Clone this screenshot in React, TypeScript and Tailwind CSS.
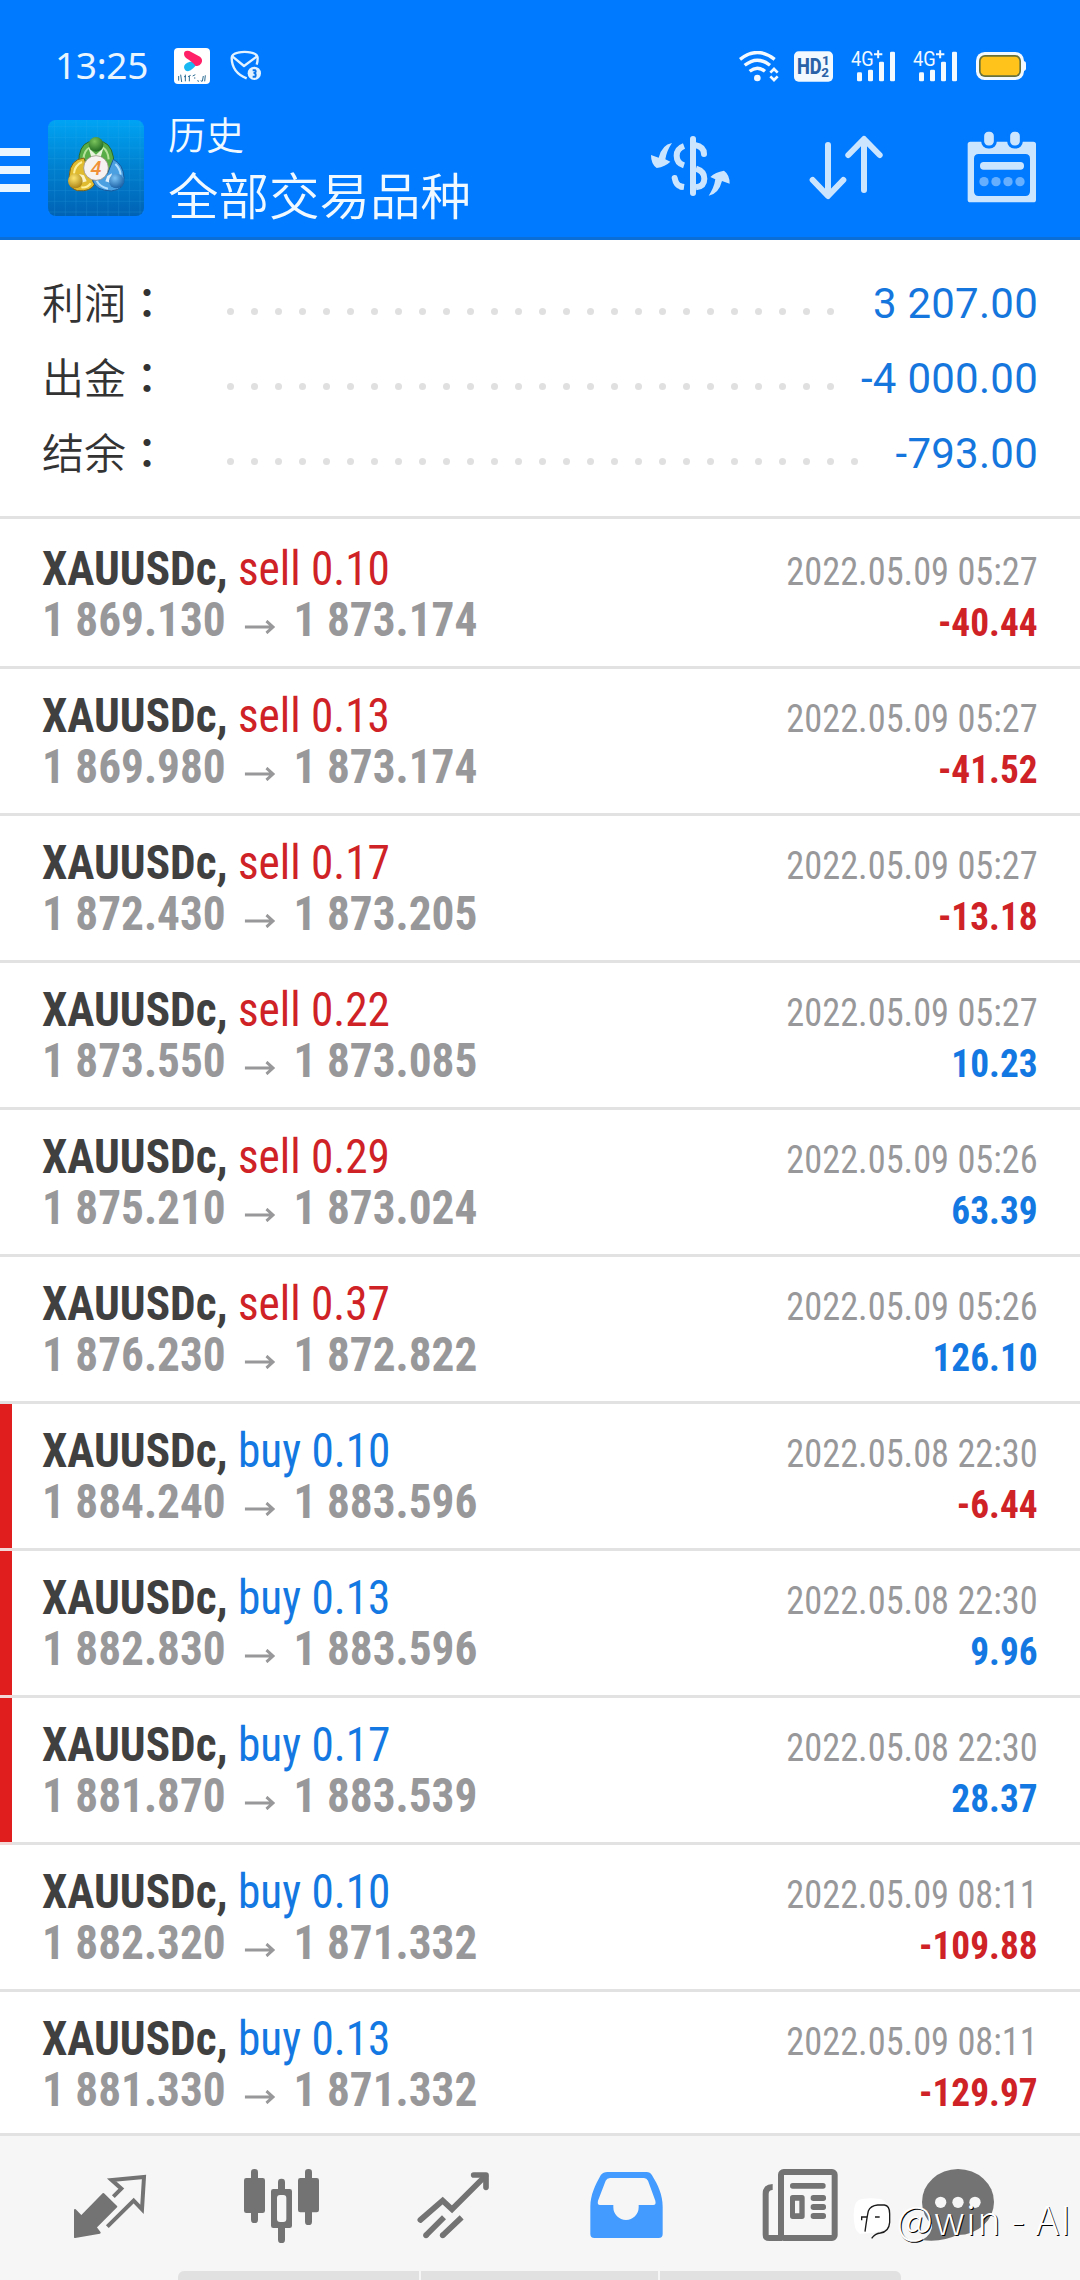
import type { ReactNode } from "react";

type Deal = {
  side: "sell" | "buy";
  volume: string;
  open: string;
  close: string;
  time: string;
  profit: string;
  marked?: boolean;
};

const SUMMARY = [
  { label: "利润", value: "3 207.00", dots: 26 },
  { label: "出金", value: "-4 000.00", dots: 26 },
  { label: "结余", value: "-793.00", dots: 27 },
];

const DEALS: Deal[] = [
  { side: "sell", volume: "0.10", open: "1 869.130", close: "1 873.174", time: "2022.05.09 05:27", profit: "-40.44" },
  { side: "sell", volume: "0.13", open: "1 869.980", close: "1 873.174", time: "2022.05.09 05:27", profit: "-41.52" },
  { side: "sell", volume: "0.17", open: "1 872.430", close: "1 873.205", time: "2022.05.09 05:27", profit: "-13.18" },
  { side: "sell", volume: "0.22", open: "1 873.550", close: "1 873.085", time: "2022.05.09 05:27", profit: "10.23" },
  { side: "sell", volume: "0.29", open: "1 875.210", close: "1 873.024", time: "2022.05.09 05:26", profit: "63.39" },
  { side: "sell", volume: "0.37", open: "1 876.230", close: "1 872.822", time: "2022.05.09 05:26", profit: "126.10" },
  { side: "buy", volume: "0.10", open: "1 884.240", close: "1 883.596", time: "2022.05.08 22:30", profit: "-6.44", marked: true },
  { side: "buy", volume: "0.13", open: "1 882.830", close: "1 883.596", time: "2022.05.08 22:30", profit: "9.96", marked: true },
  { side: "buy", volume: "0.17", open: "1 881.870", close: "1 883.539", time: "2022.05.08 22:30", profit: "28.37", marked: true },
  { side: "buy", volume: "0.10", open: "1 882.320", close: "1 871.332", time: "2022.05.09 08:11", profit: "-109.88" },
  { side: "buy", volume: "0.13", open: "1 881.330", close: "1 871.332", time: "2022.05.09 08:11", profit: "-129.97" },
];

const SignalIcon = () => (
  <svg className="h-[31px] w-[44px] overflow-visible" viewBox="0 0 132 93" fill="#f2f9ff">
    <text x="0" y="46" fontFamily="Roboto, sans-serif" fontSize="62" textLength="68" lengthAdjust="spacingAndGlyphs">
      4G
    </text>
    <path d="M69 10h25M81.500 -2v24" stroke="#f2f9ff" strokeWidth="6" />
    <rect x="18" y="64" width="15" height="27" rx="4" />
    <rect x="51" y="56" width="15" height="35" rx="4" />
    <rect x="84" y="32" width="15" height="59" rx="4" />
    <rect x="117" y="2" width="15" height="89" rx="4" />
  </svg>
);

const StatusBar = () => (
  <div className="flex h-24 items-center pt-9 pr-[54px] pl-[55px]">
    <div className="w-[119px] pb-[3px] font-['Noto_Sans',sans-serif] text-[37px] leading-none tracking-[-0.3px] text-[#e8f5ff]">
      13:25
    </div>

    {/* Notifications */}
    <svg className="size-9" viewBox="0 0 108 108">
      <rect width="108" height="108" rx="12" fill="#fff" />
      <path d="M30 58Q30 46 48 41L72 42Q58 66 42 70Q32 70 30 58z" fill="#19b8f2" />
      <path d="M30 18Q30 6 46 9L78 26Q88 34 82 46Q76 56 64 53Q56 42 36 30Q30 26 30 18z" fill="#ff2068" />
      <path
        d="M14 84v14M20 80l3 22M30 86h6M34 80v20M42 86l8-4M46 84v16M56 84l8-4M60 90h4M70 98l5 2M80 98l4 2M88 84l-3 16M94 82l-2 18"
        stroke="#2b6c92"
        strokeWidth="3"
        fill="none"
      />
    </svg>
    <svg className="ml-5 h-[32px] w-[32px]" viewBox="0 0 96 96" fill="none" stroke="#e2f3ff" strokeWidth="7" strokeLinejoin="round">
      <path d="M50 85Q6 68 5 24Q5 12 24 8Q44 3 64 8Q83 12 83 24Q83 36 80 44" />
      <path d="M8 20L42 48L80 20" />
      <circle cx="73" cy="70" r="20" fill="#e2f3ff" stroke="none" />
      <path d="M68 61h8q3 6-3 8q6 2 3 11h-8" stroke="#0a73e8" strokeWidth="6" />
    </svg>

    <div className="ml-auto flex items-center">
      <svg className="h-[31px] w-10" viewBox="0 0 120 93" fill="none" stroke="#f2f9ff" strokeWidth="10">
        <path d="M3 25Q55 -16 107 25" />
        <path d="M17 43Q55 12 93 43" />
        <path d="M32 61Q55 42 78 61" />
        <circle cx="55" cy="81" r="10" fill="#f2f9ff" stroke="none" />
        <path d="M94 65l11-11l11 11M94 76l11 11l11-11" strokeWidth="8" />
      </svg>
      <svg className="ml-[15px] h-[31px] w-[39px]" viewBox="0 0 117 93">
        <rect y="1" width="117" height="91" rx="14" fill="#f2f9ff" />
        <g fill="#2a62a8" fontFamily="Roboto, sans-serif" fontWeight="800">
          <text x="9" y="70" fontSize="66" textLength="74" lengthAdjust="spacingAndGlyphs">HD</text>
          <text x="84" y="43" fontSize="40">1</text>
          <text x="82" y="77" fontSize="40">2</text>
        </g>
      </svg>
      <div className="ml-[18px] flex gap-[18px]">
        <SignalIcon />
        <SignalIcon />
      </div>
      <svg className="ml-[19px] h-7 w-[50px]" viewBox="0 0 150 84">
        <rect x="120" y="27" width="30" height="30" rx="8" fill="#f2f9ff" />
        <rect width="144" height="84" rx="26" fill="#f2f9ff" />
        <rect x="9" y="9" width="126" height="66" rx="18" fill="#66713c" />
        <rect x="14" y="14" width="116" height="56" rx="13" fill="#ffc31c" />
      </svg>
    </div>
  </div>
);

const AppLogo = () => (
  <svg className="size-24" viewBox="0 0 288 288">
    <defs>
      <linearGradient id="logoBg" x1="0" y1="0" x2="0" y2="1">
        <stop offset="0" stopColor="#00a4f4" />
        <stop offset="0.5" stopColor="#0080cf" />
        <stop offset="1" stopColor="#0062b4" />
      </linearGradient>
      <radialGradient id="green" cx="0.4" cy="0.3" r="0.8">
        <stop offset="0" stopColor="#7cc45c" />
        <stop offset="1" stopColor="#14601c" />
      </radialGradient>
      <radialGradient id="yellow" cx="0.4" cy="0.3" r="0.8">
        <stop offset="0" stopColor="#ffe670" />
        <stop offset="1" stopColor="#a1780a" />
      </radialGradient>
      <radialGradient id="blue" cx="0.4" cy="0.3" r="0.8">
        <stop offset="0" stopColor="#7cc4f6" />
        <stop offset="1" stopColor="#0f559c" />
      </radialGradient>
    </defs>
    <rect width="288" height="288" rx="24" fill="url(#logoBg)" />
    <path
      d="M20 0v288M52 0v288M84 0v288M116 0v288M148 0v288M180 0v288M212 0v288M244 0v288M276 0v288M0 20h288M0 52h288M0 84h288M0 116h288M0 148h288M0 180h288M0 212h288M0 244h288M0 276h288"
      stroke="#3fb4ee"
      strokeWidth="1.500"
      opacity="0.35"
    />
    <path d="M92 130Q92 76 122 66h44q32 12 32 72l-30 28l-46-20z" fill="#58ad48" stroke="#2a6a2a" strokeWidth="3" />
    <path d="M106 118Q108 90 126 82M182 118Q180 92 164 82" stroke="#b5e39a" strokeWidth="6" fill="none" />
    <path d="M122 84L144 104L166 84L158 112H130z" fill="#e6f4dc" />
    <path d="M108 114Q66 118 64 166Q58 204 88 212Q128 216 140 192l-16-30z" fill="#e0bb30" stroke="#7c6018" strokeWidth="3" />
    <path d="M78 160Q80 136 102 126M100 202Q118 204 128 190" stroke="#fff19a" strokeWidth="6" fill="none" />
    <path d="M94 162L108 166L116 184L100 188z" fill="#fbf3c8" />
    <path d="M196 118Q226 134 228 172Q232 208 190 213Q144 212 134 182l44-20z" fill="#4ba0e2" stroke="#185a9c" strokeWidth="3" />
    <path d="M202 132Q216 146 218 164M180 206Q154 200 146 182" stroke="#b4e0ff" strokeWidth="6" fill="none" />
    <path d="M192 160L178 168L172 184L186 188z" fill="#dff0fc" />
    <circle cx="144" cy="73" r="22" fill="url(#green)" />
    <circle cx="82" cy="183" r="22" fill="url(#yellow)" />
    <circle cx="205" cy="183" r="22" fill="url(#blue)" />
    <circle cx="144" cy="144" r="37" fill="#f6f2f2" stroke="#8b8377" strokeWidth="2" />
    <text x="144" y="165" textAnchor="middle" fontFamily="Roboto, sans-serif" fontSize="60" fontWeight="500" fontStyle="italic" fill="#f09038">
      4
    </text>
  </svg>
);

const CurrencyIcon = () => (
  <svg className="size-[84px]" viewBox="0 0 252 252" fill="none" stroke="#cce5ff" strokeWidth="18">
    <rect x="126" y="36" width="18" height="180" rx="9" fill="#cce5ff" stroke="none" />
    <path d="M108 66Q86 74 86 95Q86 117 108 124M144 134Q169 142 169 164Q169 187 144 190" />
    <path d="M140 63Q168 68 168 90M80 162Q84 184 99 188" strokeLinecap="round" />
    <path d="M95 187L108 189" />
    <path id="swap" d="M72 57Q42 62 32 101L9 93Q9 120 26 132Q52 128 67 113L52 106Q56 80 72 57z" fill="#cce5ff" stroke="none" />
    <use href="#swap" transform="rotate(180 127 136)" />
  </svg>
);

const SortIcon = () => (
  <svg className="size-[84px]" viewBox="0 0 252 252" fill="none" stroke="#cce5ff" strokeWidth="18" strokeLinecap="round" strokeLinejoin="round">
    <path d="M72 63V214M26 168L72 216L118 168" />
    <path d="M180 198V48M133 93L180 45L227 93" />
  </svg>
);

const CalendarIcon = () => (
  <svg className="size-[84px]" viewBox="0 0 252 252" fill="#cce5ff">
    <path
      fillRule="evenodd"
      d="M31 53H220Q228 53 228 61V227Q228 235 220 235H31Q23 235 23 227V61Q23 53 31 53zM56 90Q42 90 42 104V202Q42 216 56 216H196Q210 216 210 202V104Q210 90 196 90z"
    />
    <rect x="68" y="19" width="38" height="50" rx="17" stroke="#007aff" strokeWidth="9" />
    <rect x="146" y="19" width="38" height="50" rx="17" stroke="#007aff" strokeWidth="9" />
    <rect x="60" y="114" width="132" height="23" rx="11" />
    <g opacity="0.5">
      <circle cx="72" cy="173" r="14" />
      <circle cx="108" cy="173" r="14" />
      <circle cx="144" cy="173" r="14" />
      <circle cx="180" cy="173" r="14" />
    </g>
  </svg>
);

const Header = () => (
  <header className="h-60 border-b-3 border-[#0a6ed6] bg-[#007aff]">
    <StatusBar />
    <div className="flex h-[141px] items-center pt-[3px] pr-9">
      {/* Hamburger */}
      <div className="flex w-[30px] flex-col gap-2.5 pt-1">
        <div className="h-2 bg-[#eaf6ff]" />
        <div className="h-2 bg-[#eaf6ff]" />
        <div className="h-2 bg-[#eaf6ff]" />
      </div>
      <div className="ml-[18px]">
        <AppLogo />
      </div>
      <div className="ml-6 pb-[5px] font-['Noto_Sans_CJK_SC',sans-serif] font-[350] text-[#f0f9ff]">
        <div className="text-[38px] leading-[54px]">历史</div>
        <div className="text-[50.500px] leading-[66px]">全部交易品种</div>
      </div>
      <div className="ml-auto flex gap-[72px] pb-[5px]">
        <CurrencyIcon />
        <SortIcon />
        <CalendarIcon />
      </div>
    </div>
  </header>
);

const Summary = () => (
  <section className="flex h-[279px] flex-col border-b-3 border-[#e2e2e2] pt-[26px] pr-[42px] pl-[42px]">
    {SUMMARY.map((item) => (
      <div key={item.label} className="flex h-[75px] items-center">
        <div className="w-[176px] pb-1.5 font-['Noto_Sans_CJK_SC',sans-serif] text-[42px] leading-none font-[350] text-[#333]">
          {item.label}
          <span className="font-['Noto_Sans_CJK_TC',sans-serif] font-medium" lang="zh-TW">
            ：
          </span>
        </div>
        <div className="flex pt-[15px]">
          {Array.from({ length: item.dots }, (_, i) => (
            <div key={i} className="mx-[8.500px] size-[7px] rounded-full bg-[#e0e0e0]" />
          ))}
        </div>
        <div className="ml-auto font-[Roboto,sans-serif] text-[42px] leading-none tracking-[0.25px] text-[#1576de]">{item.value}</div>
      </div>
    ))}
  </section>
);

const DealRow = ({ deal }: { deal: Deal }) => (
  <div className="shrink-0">
    <div className="flex h-36">
      <div className={`w-3 ${deal.marked ? "bg-[#e01e1e]" : ""}`} />
      <div className="flex flex-1 justify-between pt-[21px] pr-[42px] pl-[30px] font-[Roboto,sans-serif] font-stretch-condensed">
        <div className="origin-left scale-x-[0.943] text-[48px] leading-[51px] whitespace-nowrap">
          <div>
            <span className="font-bold text-[#404040]">XAUUSDc,</span>{" "}
            <span className={deal.side === "sell" ? "text-[#cf2227]" : "text-[#1478e2]"}>
              {deal.side} {deal.volume}
            </span>
          </div>
          <div className="flex font-bold text-[#98989a]">
            {deal.open}
            <svg className="mt-[26px] mr-[19px] ml-[20px] h-3.5 w-[33px]" viewBox="0 0 33 14" fill="none" stroke="#98989a" strokeWidth="3">
              <path d="M0 7H30M23 1L30 7L23 13" />
            </svg>
            {deal.close}
          </div>
        </div>
        <div className="pt-1 text-right text-[39px] leading-[51px]">
          <div className="origin-right scale-x-[0.932] text-[#98989a]">{deal.time}</div>
          <div className={`origin-right scale-x-[0.957] font-bold ${deal.profit.startsWith("-") ? "text-[#cf2227]" : "text-[#1478e2]"}`}>
            {deal.profit}
          </div>
        </div>
      </div>
    </div>
    <div className="h-[3px] bg-[#e2e2e2]">
      <div className={`h-full w-3 ${deal.marked ? "bg-[#f3d8d8]" : ""}`} />
    </div>
  </div>
);

const NavIcon = ({ children }: { children: ReactNode }) => (
  <svg className="size-24" viewBox="0 0 288 288" fill="#737373">
    {children}
  </svg>
);

const BottomNav = () => (
  <nav className="flex h-[147px] flex-col justify-between border-t-3 border-[#e2e2e2] bg-[#f6f6f6] pt-6">
    <div className="flex justify-between pr-[62px] pl-[62px]">
      {/* Quotes */}
      <NavIcon>
        <path d="M154 110L178 86L149 60L246 51L240 148L215 122L136 200" fill="none" stroke="#737373" strokeWidth="12" />
        <path d="M39 150L58 169L124 102L163 140L101 202L113 218L39 231z" stroke="#737373" strokeWidth="6" strokeLinejoin="round" />
      </NavIcon>
      {/* Charts */}
      <NavIcon>
        <rect x="51" y="27" width="21" height="162" rx="10" />
        <rect x="30" y="54" width="63" height="105" rx="7" />
        <rect x="132" y="56" width="21" height="193" rx="10" />
        <rect x="111" y="87" width="63" height="117" rx="7" />
        <rect x="129" y="105" width="28" height="81" rx="9" fill="#f6f6f6" />
        <rect x="213" y="27" width="21" height="168" rx="10" />
        <rect x="192" y="54" width="63" height="103" rx="7" />
      </NavIcon>
      {/* Trade */}
      <NavIcon>
        <g fill="none" stroke="#737373" strokeWidth="17">
          <path d="M43 180L110 122L138 148L238 48" strokeLinecap="round" />
          <path d="M203 45H240V82" strokeLinecap="round" strokeLinejoin="round" />
          <path d="M60 226L114 172M110 226L167 172" />
        </g>
        <circle cx="60" cy="226" r="8.500" />
        <circle cx="110" cy="226" r="8.500" />
      </NavIcon>
      {/* History */}
      <NavIcon>
        <path
          fill="#439bff"
          fillRule="evenodd"
          d="M88 36H206Q216 36 222 46C240 75 254 105 254 140V222Q254 234 242 234H49Q37 234 37 222V140C37 105 52 75 68 46Q76 36 88 36zM96 54Q87 54 83 62L60 122Q57 135 66 135H106V142A38 38 0 0 0 182 142V135H226Q235 135 232 122L210 62Q206 54 198 54z"
        />
      </NavIcon>
      {/* News */}
      <NavIcon>
        <g fill="none" stroke="#737373" strokeWidth="18">
          <rect x="93" y="36" width="161" height="198" rx="8" />
          <path d="M68 81Q47 81 47 102V224Q47 234 58 234H96" />
        </g>
        <rect x="120" y="69" width="107" height="17" rx="8" />
        <path fillRule="evenodd" d="M128 105H156Q164 105 164 113V169Q164 177 156 177H128Q120 177 120 169V113Q120 105 128 105zM135 122V160H148V122z" />
        <rect x="182" y="105" width="46" height="18" rx="8" />
        <rect x="182" y="132" width="46" height="18" rx="8" />
        <rect x="182" y="159" width="46" height="18" rx="8" />
      </NavIcon>
      {/* Messages */}
      <NavIcon>
        <ellipse cx="108" cy="126" rx="108" ry="99" />
        <path d="M0 240Q60 248 112 222L30 186Q34 222 0 240z" />
        <g fill="#f6f6f6">
          <circle cx="56" cy="127" r="17" />
          <circle cx="108" cy="127" r="17" />
          <circle cx="159" cy="127" r="17" />
        </g>
      </NavIcon>
    </div>

    {/* Gesture bar */}
    <div className="ml-[178px] flex h-[9px] w-[723px] gap-0.5 overflow-hidden rounded-t-md">
      <div className="w-[241px] bg-[#e1e1e1]" />
      <div className="w-[237px] bg-[#e1e1e1]" />
      <div className="flex-1 bg-[#e1e1e1]" />
    </div>
  </nav>
);

const Watermark = () => (
  <div className="absolute right-2 bottom-[41px] flex items-center gap-1.5">
    <svg className="h-[42px] w-[38px]" viewBox="0 0 114 126">
      <path d="M18 8Q2 16 2 56Q2 100 20 110L60 108L100 96Q112 80 110 50Q108 14 84 6Q40 0 18 8z" fill="#fff" />
      <path
        d="M46 42Q52 26 74 24H94Q110 26 110 50V76Q108 104 82 108Q66 110 56 124M46 42Q42 60 36 104M26 70V60H42M66 60h14"
        fill="none"
        stroke="#1c1c1c"
        strokeWidth="4"
      />
    </svg>
    <span className="font-['Noto_Sans_CJK_SC',sans-serif] text-[40px] leading-none font-light tracking-[1px] whitespace-pre text-white [text-shadow:1px_1px_0px_#000]">
      @win - AI
    </span>
  </div>
);

const App = () => {
  return (
    <div className="relative flex h-[2280px] w-[1080px] flex-col overflow-hidden bg-white">
      <Header />
      <Summary />
      <main className="flex min-h-0 flex-1 flex-col overflow-hidden pt-[3px]">
        {DEALS.map((deal, index) => (
          <DealRow key={index} deal={deal} />
        ))}
      </main>
      <BottomNav />
      <Watermark />
    </div>
  );
};

export default App;
